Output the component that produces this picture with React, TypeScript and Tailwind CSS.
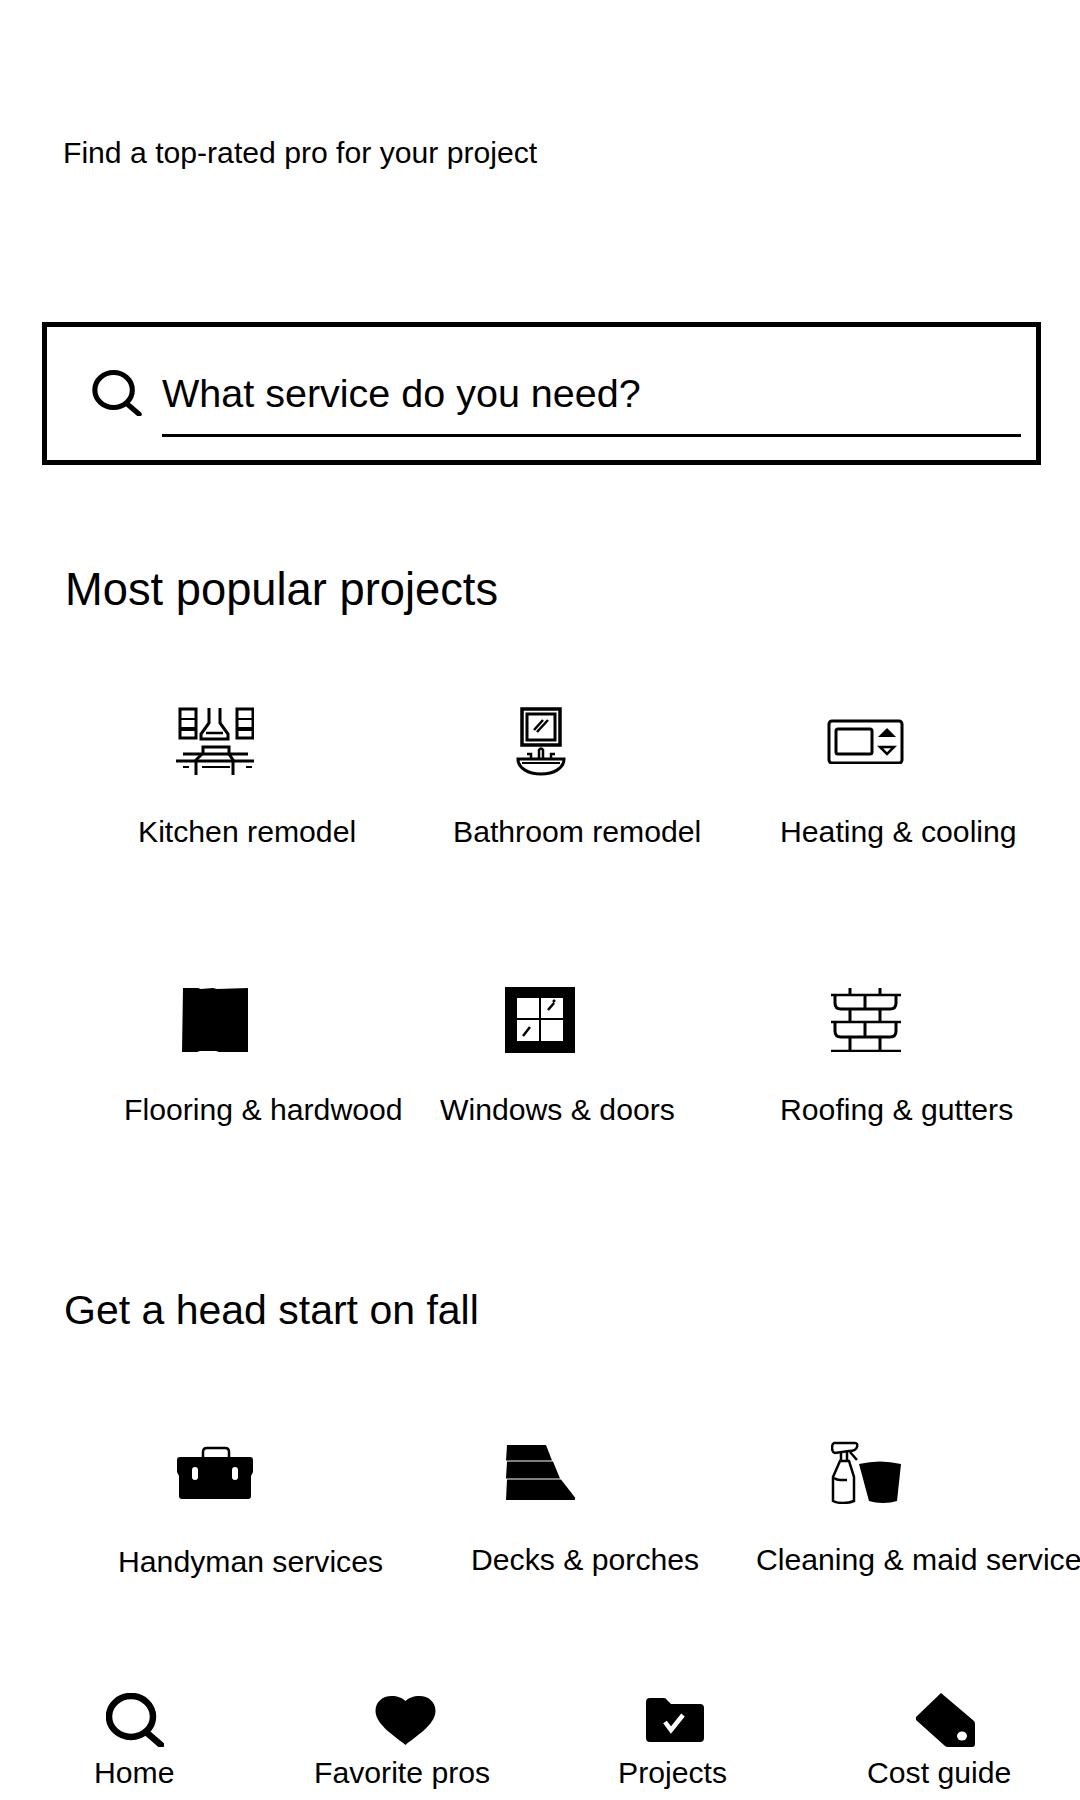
const Kitchen = () => (
  <svg viewBox="176 706 78 70" className="w-[78px] h-[70px]" fill="none" stroke="#000" strokeWidth="3">
    <rect x="180" y="709" width="16" height="29" />
    <path d="M180 719h16M237 719h16" strokeWidth="2" />
    <path d="M180 729h16M237 729h16" strokeWidth="4" />
    <rect x="237" y="709" width="16" height="29" />
    <path d="M209 708v15l-8 11v5h27v-5l-8-11v-15" />
    <path d="M206 733h17" strokeWidth="2.5" />
    <path d="M203 755v-8h26v8" />
    <path d="M183 754h65M176 761h78" />
    <path d="M196 775v-15l6-6M233 775v-15l-4-6" />
    <path d="M202 767h28" strokeWidth="2" />
    <path d="M183 767h6M246 767h6" strokeWidth="2" />
  </svg>
)

const Bathroom = () => (
  <svg viewBox="516 706 50 70" className="w-[50px] h-[70px]" fill="none" stroke="#000" strokeWidth="3">
    <rect x="522" y="709" width="38" height="36" strokeWidth="3.5" />
    <rect x="527" y="714" width="28" height="26" />
    <path d="M534 730l9-10M537 732l11-12" strokeWidth="2.5" />
    <path d="M518 759h46c0 9-10 15-23 15s-23-6-23-15z" />
    <path d="M522 763h38" strokeWidth="2" />
    <path d="M539 758v-8q2-3 4 0v8M531 758v-4h-4M551 758v-4h4" strokeWidth="2.5" />
  </svg>
)

const Thermostat = () => (
  <svg viewBox="826 719 77 45" className="w-[77px] h-[45px]" fill="none" stroke="#000" strokeWidth="3">
    <rect x="828" y="721" width="73" height="42" rx="3" />
    <rect x="835" y="729" width="36" height="25" rx="2" />
    <path d="M877 737l9-9 9 9z" fill="#000" stroke="none" />
    <path d="M879 747h14l-7 7z" strokeWidth="2.5" />
  </svg>
)

const Flooring = () => (
  <svg viewBox="182 988 67 65" className="w-[67px] h-[65px]">
    <path d="M183 989h15l3 1 12-1 4 1 31-1v64h-29l-3-1-16 0-3 1h-15z" fill="#000" />
  </svg>
)

const Windows = () => (
  <svg viewBox="505 987 70 66" className="w-[70px] h-[66px]">
    <rect x="505" y="987" width="70" height="66" fill="#000" />
    <rect x="517" y="998" width="46" height="43" fill="#fff" />
    <path d="M540 998v43M517 1019h46" stroke="#000" strokeWidth="2" />
    <path d="M548 1010l6-7M553 1002l2-2M523 1036l7-9" stroke="#000" strokeWidth="2.5" />
  </svg>
)

const Roofing = () => (
  <svg viewBox="831 988 70 65" className="w-[70px] h-[65px]" fill="none" stroke="#000" strokeWidth="3">
    <path d="M831 996h70M831 1023h70M831 1052h70" strokeWidth="2.5" />
    <path d="M850 989v7M880 989v7M850 1010v13M880 1010v13M850 1038v14M880 1038v14M865 996v14M865 1023v15" />
    <path d="M835 996v8q0 6 6 6h49q6 0 6-6v-8M835 1023v9q0 6 6 6h49q6 0 6-6v-9" />
  </svg>
)

const Toolbox = () => (
  <svg viewBox="177 1446 76 54" className="w-[76px] h-[54px] block">
    <path d="M203 1458v-6q0-4 4-4h18q4 0 4 4v6" fill="none" stroke="#000" strokeWidth="2.5" />
    <path d="M180 1457h70q3 0 3 3v12l-2 4v20q0 3-3 3h-66q-3 0-3-3v-20l-2-4v-12q0-3 3-3z" fill="#000" />
    <rect x="192" y="1467" width="6" height="13" rx="3" fill="#fff" />
    <rect x="232" y="1467" width="6" height="13" rx="3" fill="#fff" />
  </svg>
)

const Decks = () => (
  <svg viewBox="506 1445 70 55" className="w-[70px] h-[55px] block">
    <path d="M507 1445h39l6 15.500h-46z" fill="#000" />
    <path d="M507 1461.500h46l7 17h-54z" fill="#000" />
    <path d="M507 1479.500h54l14 18v2.500h-69z" fill="#000" />
  </svg>
)

const Cleaning = () => (
  <svg viewBox="831 1441 71 63" className="w-[71px] h-[63px] block" fill="none" stroke="#000" strokeWidth="2.5">
    <path d="M834 1443h21q3 0 2 4t-8 4l-14 2q-3-1-3-5t2-5z" />
    <path d="M841 1453v8M847 1452v9M850 1452l7 8" />
    <path d="M840 1461h9l5 16v24q-5 2-11 2t-10-2v-24z" />
    <path d="M834 1478q3 2 6 2h7" />
    <path d="M859 1464q21-5 42 0l-4 37q-6 2-14 2t-14-2z" fill="#000" stroke="none" />
  </svg>
)

const SearchGlyph = ({ className, stroke }: { className: string; stroke: number }) => (
  <svg viewBox="0 0 58 54" className={className} fill="none" stroke="#000" strokeWidth={stroke}>
    <ellipse cx="25" cy="23.5" rx="22" ry="20.5" />
    <path d="M40 39l15 13" strokeLinecap="round" />
  </svg>
)

const Heart = () => (
  <svg viewBox="375 1696 61 49" className="w-[61px] h-[49px]">
    <path d="M405.500 1745c-8-7-30-20-30-34 0-9 7-15 16-15 6 0 11 2 14 5 3-3 8-5 14-5 9 0 16 6 16 15 0 14-22 27-30 34z" fill="#000" />
  </svg>
)

const Folder = () => (
  <svg viewBox="646 1698 58 44" className="w-[58px] h-[44px]">
    <path d="M650 1698h14q2 0 3 2l4 4h29q4 0 4 4v30q0 4-4 4h-50q-4 0-4-4v-36q0-4 4-4z" fill="#000" />
    <path d="M665 1722l6 8 12-15" fill="none" stroke="#fff" strokeWidth="4.500" />
  </svg>
)

const Tag = () => (
  <svg viewBox="916 1693 59 54" className="w-[59px] h-[54px]">
    <path d="M941 1693l33 28q1 1 1 3v20q0 3-3 3h-24q-2 0-3-1l-29-26q-1-2 0-3z" fill="#000" />
    <ellipse cx="962" cy="1736" rx="5" ry="4.500" fill="#fff" />
  </svg>
)

type Item = { label: string; icon: React.ReactNode; iconClass: string; labelClass: string }

const popular: Item[] = [
  { label: 'Kitchen remodel', icon: <Kitchen />, iconClass: 'ml-[176px]', labelClass: 'ml-[138px] mt-[39px]' },
  { label: 'Bathroom remodel', icon: <Bathroom />, iconClass: 'ml-[156px]', labelClass: 'ml-[93px] mt-[39px]' },
  { label: 'Heating & cooling', icon: <Thermostat />, iconClass: 'ml-[107px]', labelClass: 'ml-[60px] mt-[39px]' },
]

const popular2: Item[] = [
  { label: 'Flooring & hardwood', icon: <Flooring />, iconClass: 'ml-[182px]', labelClass: 'ml-[124px] mt-[40px]' },
  { label: 'Windows & doors', icon: <Windows />, iconClass: 'ml-[145px]', labelClass: 'ml-[80px] mt-[40px]' },
  { label: 'Roofing & gutters', icon: <Roofing />, iconClass: 'ml-[111px]', labelClass: 'ml-[60px] mt-[40px]' },
]

const fall: Item[] = [
  { label: 'Handyman services', icon: <Toolbox />, iconClass: 'ml-[177px] pt-[5px]', labelClass: 'ml-[118px] mt-[41px]' },
  { label: 'Decks & porches', icon: <Decks />, iconClass: 'ml-[146px] pt-[4px]', labelClass: 'ml-[111px] mt-[39px]' },
  { label: 'Cleaning & maid services', icon: <Cleaning />, iconClass: 'ml-[111px]', labelClass: 'ml-[36px] mt-[39px]' },
]

function ProjectRow({ items, className, iconRow }: { items: Item[]; className: string; iconRow: string }) {
  return (
    <div className={`grid grid-cols-3 ${className}`}>
      {items.map((item) => (
        <div key={item.label} className="flex flex-col">
          <div className={`flex ${iconRow} ${item.iconClass}`}>{item.icon}</div>
          <span className={`text-[30.2px] leading-[34px] whitespace-nowrap ${item.labelClass}`}>{item.label}</span>
        </div>
      ))}
    </div>
  )
}

export default function App() {
  return (
    <div className="w-[1080px] h-[1800px] bg-white text-black overflow-hidden flex flex-col font-['Liberation_Sans',Arial,sans-serif]">
      <p className="ml-[63px] mt-[135px] text-[30.15px] leading-[36px]">Find a top-rated pro for your project</p>

      {/* Search */}
      <div className="ml-[42px] mt-[151px] w-[999px] h-[143px] border-[5px] border-black flex items-start pl-[45px] pr-[15px]">
        <SearchGlyph className="w-[50px] h-[46px] mt-[43px] shrink-0" stroke={6} />
        <input
          readOnly
          placeholder="What service do you need?"
          className="ml-[20px] mt-[39px] flex-1 h-[71px] border-b-[3px] border-black text-[39.5px] outline-none placeholder:text-black bg-transparent pb-[14px]"
        />
      </div>

      <h2 className="ml-[65px] mt-[98px] text-[45.3px] leading-[54px] font-normal">Most popular projects</h2>
      <ProjectRow items={popular} className="mt-[89px]" iconRow="h-[70px] items-center" />
      <ProjectRow items={popular2} className="mt-[138px]" iconRow="h-[66px] items-start" />

      <h2 className="ml-[64px] mt-[158px] text-[41px] leading-[50px] font-normal">Get a head start on fall</h2>
      <ProjectRow items={fall} className="mt-[106px]" iconRow="h-[63px] items-start" />

      {/* Bottom nav */}
      <nav className="mt-auto grid grid-cols-4 pb-[9px]">
        <div className="flex flex-col">
          <SearchGlyph className="w-[58px] h-[54px] ml-[106px]" stroke={6.5} />
          <span className="ml-[94px] mt-[8px] text-[30.2px] leading-[36px] whitespace-nowrap">Home</span>
        </div>
        <div className="flex flex-col">
          <div className="ml-[105px] mt-[3px] h-[51px]"><Heart /></div>
          <span className="ml-[44px] mt-[8px] text-[30.2px] leading-[36px] whitespace-nowrap">Favorite pros</span>
        </div>
        <div className="flex flex-col">
          <div className="ml-[106px] mt-[5px] h-[49px]"><Folder /></div>
          <span className="ml-[78px] mt-[8px] text-[30.2px] leading-[36px] whitespace-nowrap">Projects</span>
        </div>
        <div className="flex flex-col">
          <div className="ml-[106px] h-[54px]"><Tag /></div>
          <span className="ml-[57px] mt-[8px] text-[30.2px] leading-[36px] whitespace-nowrap">Cost guide</span>
        </div>
      </nav>
    </div>
  )
}
